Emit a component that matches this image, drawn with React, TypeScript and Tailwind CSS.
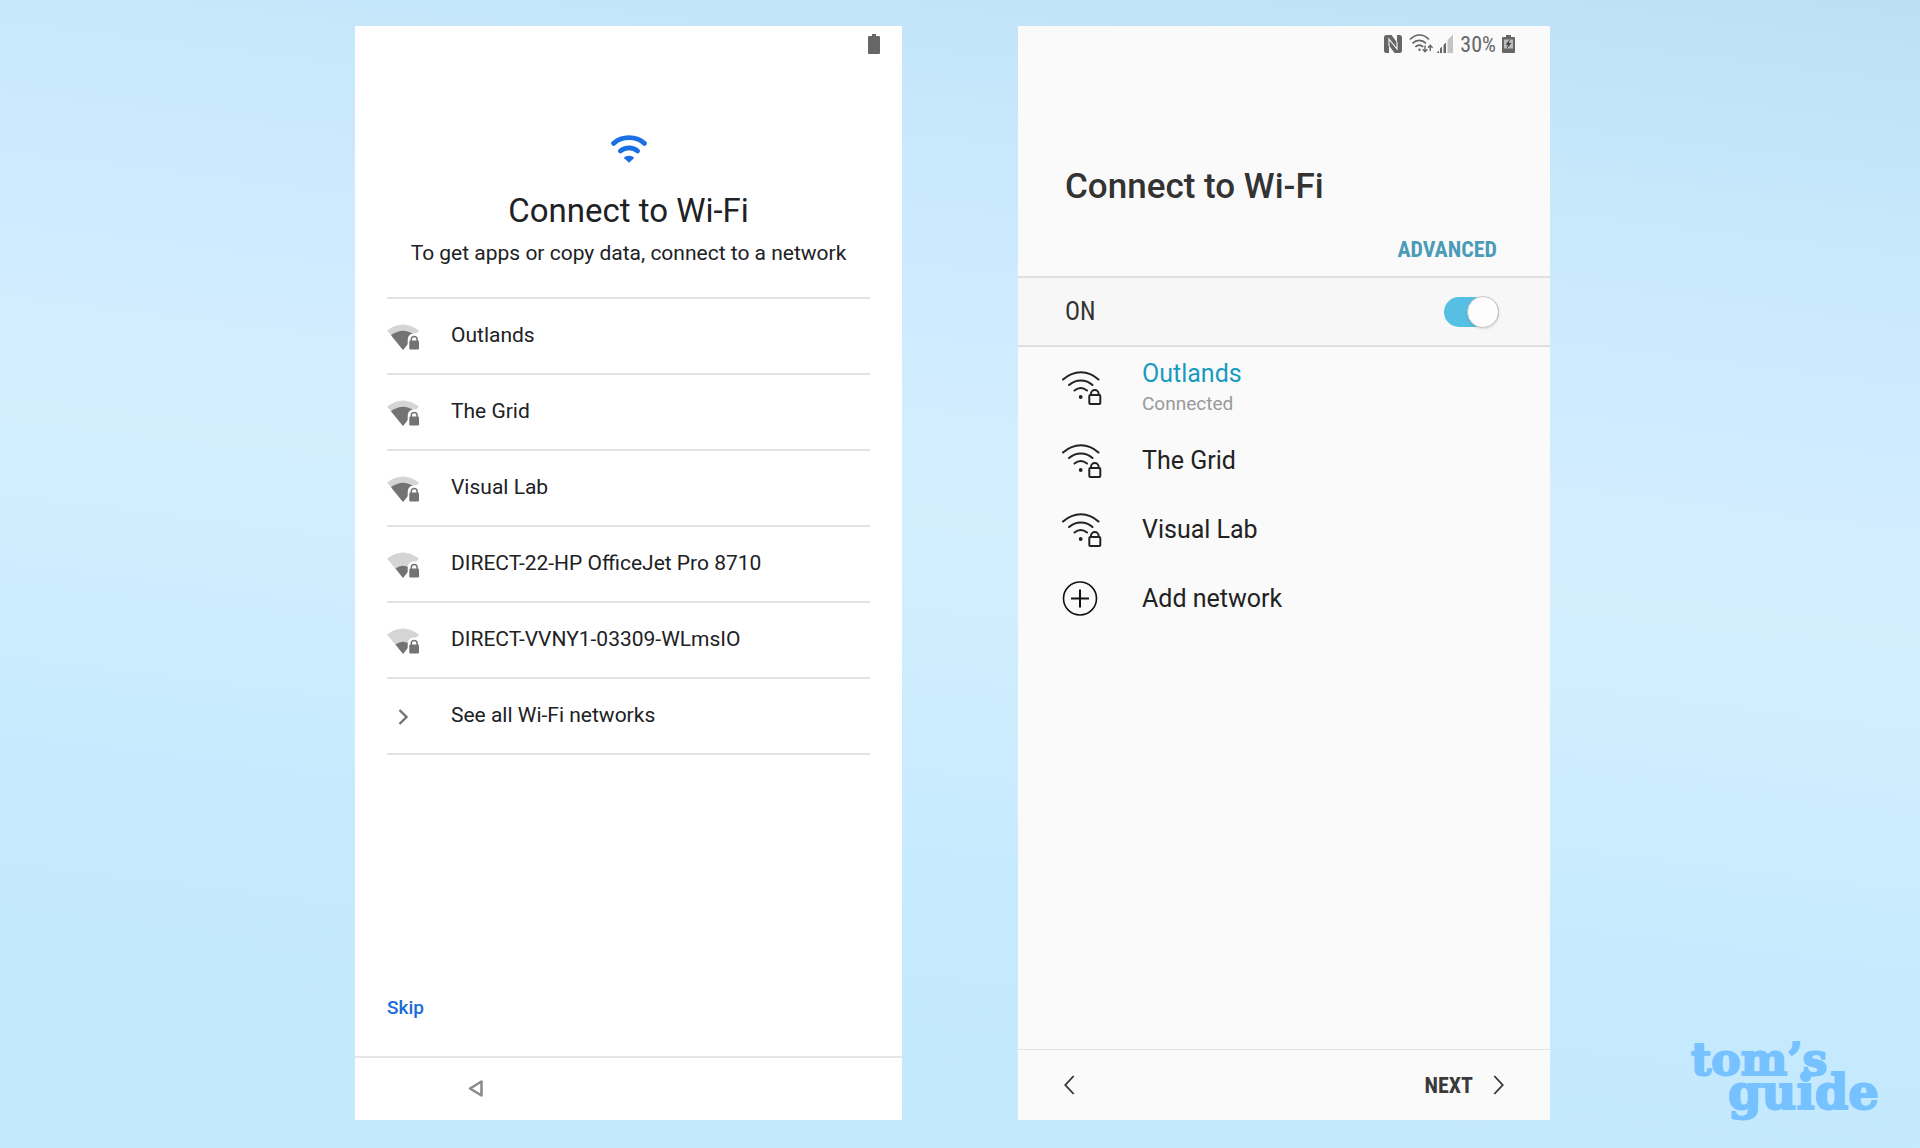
import { ReactNode, useState } from "react";

interface Network {
  name: string;
  strong: boolean;
}

const pixelNetworks: Network[] = [
  { name: "Outlands", strong: true },
  { name: "The Grid", strong: true },
  { name: "Visual Lab", strong: true },
  { name: "DIRECT-22-HP OfficeJet Pro 8710", strong: false },
  { name: "DIRECT-VVNY1-03309-WLmsIO", strong: false },
];

/* ── ICONS ── */

function BatteryIcon() {
  return (
    <svg width="12" height="20" viewBox="0 0 12 20" fill="#666" aria-hidden="true">
      <path d="M4 0h4v2h2.7c.7 0 1.3.6 1.3 1.3V18.7c0 .7-.6 1.3-1.3 1.3H1.3C.6 20 0 19.4 0 18.7V3.3C0 2.6.6 2 1.3 2H4z" />
    </svg>
  );
}

function BlueWifiIcon() {
  return (
    <svg width="36" height="28" viewBox="0 0 36 28" fill="none" stroke="#1a6fe3" strokeWidth="4.8" strokeLinecap="round" aria-hidden="true">
      <path d="M2.6 8.4C11 .8 25 .8 33.4 8.4" />
      <path d="M9.4 16C14.2 11.8 21.8 11.8 26.6 16" />
      <path d="M18 27.8l-4.6-4.2q-.8-1.2.6-1.9 4-1.7 8 0 1.4.7.6 1.9z" fill="#1a6fe3" stroke="none" />
    </svg>
  );
}

function SignalIcon({ strong }: { strong: boolean }) {
  return (
    <svg width="33" height="26" viewBox="0 0 33 26" aria-hidden="true">
      <path d="M0 6.5Q16-5.5 32 6.5L16 26z" fill="#d5d5d5" />
      {strong ? (
        <path d="M4 11.3Q16 2 28 11.3L16 26z" fill="#737373" />
      ) : (
        <path d="M8.5 16.5Q16 11 23.5 16.5L16 26z" fill="#737373" />
      )}
      <path d="M20.7 26V16.5C20.7 12 23 9.5 27 9.5H33V26z" fill="#fff" />
      <rect x="22.3" y="16.5" width="9.7" height="9" rx="1.2" fill="#737373" />
      <path d="M24.3 17.5V15.5a2.9 2.9 0 0 1 5.8 0V17.5" fill="none" stroke="#737373" strokeWidth="1.5" />
    </svg>
  );
}

function OutlineWifiIcon() {
  return (
    <svg width="40" height="34" viewBox="0 0 40 34" fill="none" stroke="#222" strokeWidth="2" strokeLinecap="round" aria-hidden="true">
      <path d="M1 8.5C12-1.2 26-1.2 36.5 8.5" />
      <path d="M7 14C14 8 24 8 30.5 14" />
      <path d="M12.5 19.5C16.5 16.2 21 16.2 25 19.5" />
      <circle cx="18.7" cy="26" r="1.9" fill="#222" stroke="none" />
      <rect x="27.3" y="24" width="11" height="9" rx="1" />
      <path d="M29 24v-1.2a3.8 3.8 0 0 1 7.6 0V24" />
    </svg>
  );
}

function AddIcon() {
  return (
    <svg width="36" height="36" viewBox="0 0 36 36" fill="none" stroke="#111" aria-hidden="true">
      <circle cx="18" cy="17.5" r="16.5" strokeWidth="1.6" />
      <path d="M18 8.5v18M9 17.5h18" strokeWidth="2" />
    </svg>
  );
}

function ChevronIcon({ back = false }: { back?: boolean }) {
  return (
    <svg width="11" height="20" viewBox="0 0 11 20" fill="none" stroke="#333" strokeWidth="1.8" aria-hidden="true">
      <path d={back ? "M9.7 1 1.3 10l8.4 9" : "M1.3 1l8.4 9-8.4 9"} />
    </svg>
  );
}

function StatusIcons() {
  return (
    <svg width="70" height="20" viewBox="0 0 70 20" fill="none" stroke="#666" aria-hidden="true">
      {/* nfc */}
      <path d="M2.5 1H7.5L13 8.5V1H15.5Q18 1 18 3.5V16.5Q18 19 15.5 19H10.5L5 11.5V19H2.5Q0 19 0 16.5V3.5Q0 1 2.5 1z" fill="#666" stroke="none" />
      <path d="M5 12V5l8 10V8" stroke="#fafafa" strokeWidth="1.1" />
      {/* wifi */}
      <path d="M26 5.5C31.5-.5 39.5-.5 45 5.5M28.5 9.3c4-4 9.5-4 13.5 0M31.3 12.8c2.5-2.2 5.5-2.2 8 0" strokeWidth="1.7" />
      <circle cx="35.5" cy="15.8" r="1.2" fill="#666" stroke="none" />
      <path d="M41 11.5v6M38.7 15.2l2.3 2.6 2.3-2.6M46.3 17v-5M44 13.8l2.3-2.6 2.3 2.6" strokeWidth="1.4" />
      {/* cell signal */}
      <path d="M63.5 19V6L69 .5V19z" fill="#c4c4c4" stroke="none" />
      <path d="M52.5 19l2.5-2.5V19zM56 19v-4.5l2-2V19zM59.5 19v-8l2.5-2.5V19z" fill="#666" stroke="none" />
    </svg>
  );
}

function ChargingIcon() {
  return (
    <svg width="13" height="18" viewBox="0 0 13 18" fill="#666" aria-hidden="true">
      <path d="M4 0h5v2h3q1 0 1 1v14q0 1-1 1H1q-1 0-1-1V3q0-1 1-1h3z" />
      <path d="M2 4.5h9v9H2z" fill="#bbb" />
      <path d="M8 4 3.5 9.7h2.3L4.5 14l5-6H7z" fill="#444" />
    </svg>
  );
}

function TomsGuideLogo() {
  return (
    <svg
      width="196"
      height="92"
      viewBox="0 0 196 92"
      className="font-[DejaVu_Serif,serif] font-bold"
      fill="#76c1ff"
      stroke="#76c1ff"
      strokeWidth="2"
      strokeLinejoin="round"
      role="img"
      aria-label="tom’s guide"
    >
      <text x="3" y="43" fontSize="44">tom’s</text>
      <text x="40" y="77" fontSize="48">guide</text>
    </svg>
  );
}

/* ── LEFT PHONE ── */

function PixelRow({ icon, label }: { icon: ReactNode; label: string }) {
  return (
    <li className="border-b-2 border-[#e2e2e2]">
      <button type="button" className="flex h-[74px] w-full items-center text-left">
        <span className="flex w-16 pt-0.5">{icon}</span>
        <span>{label}</span>
      </button>
    </li>
  );
}

function PixelPhone() {
  return (
    <section className="flex min-w-0 flex-[547] flex-col bg-white font-[Roboto,sans-serif] text-[#202124]">
      <div className="flex h-10 justify-end pt-2 pr-[22px]">
        <BatteryIcon />
      </div>

      <header className="flex flex-col items-center pt-[69px]">
        <BlueWifiIcon />
        <h1 className="mt-6 text-[33px] leading-12">Connect to Wi-Fi</h1>
        <p className="mt-0.5 text-[21px] leading-8">To get apps or copy data, connect to a network</p>
      </header>

      <ul className="mx-8 mt-7 border-t-2 border-[#e2e2e2] text-[21px]">
        {pixelNetworks.map((n) => (
          <PixelRow key={n.name} icon={<SignalIcon strong={n.strong} />} label={n.name} />
        ))}
        <PixelRow
          label="See all Wi-Fi networks"
          icon={
            <svg width="33" height="16" viewBox="0 0 33 16" fill="none" stroke="#737373" strokeWidth="2.4" aria-hidden="true">
              <path d="M12.5 1l7 7-7 7" />
            </svg>
          }
        />
      </ul>

      <button
        type="button"
        className="mt-auto mb-8 ml-8 self-start text-[19px] leading-8 font-medium text-[#1a6bd8]"
      >
        Skip
      </button>

      <nav className="flex h-16 items-center border-t-2 border-[#e6e6e6]">
        <button type="button" aria-label="Back" className="ml-[113px]">
          <svg width="16" height="18" viewBox="0 0 16 18" fill="none" stroke="#8c8c8c" strokeWidth="2.6" strokeLinejoin="round" aria-hidden="true">
            <path d="M13.5 1.5v14L2 8.5z" />
          </svg>
        </button>
      </nav>
    </section>
  );
}

/* ── RIGHT PHONE ── */

function GalaxyRow({ icon, label }: { icon: ReactNode; label: string }) {
  return (
    <li>
      <button type="button" className="flex h-[69px] w-full items-center text-left">
        <span className="flex w-20">{icon}</span>
        <span>{label}</span>
      </button>
    </li>
  );
}

function GalaxyPhone() {
  const [wifiOn, setWifiOn] = useState(true);

  return (
    <section className="flex min-w-0 flex-[532] flex-col bg-[#fafafa] font-[Roboto,sans-serif] text-[#222]">
      <div className="flex h-9 items-center justify-end pr-[35px] text-[22px] text-[#666]">
        <StatusIcons />
        <span className="mx-1.5 font-[Roboto_Condensed,Roboto,sans-serif]">30%</span>
        <ChargingIcon />
      </div>

      <header className="flex flex-col pt-[101px] pr-[53px] pl-[47px]">
        <h1 className="text-[35px] leading-12 font-medium text-[#333]">Connect to Wi-Fi</h1>
        <button
          type="button"
          className="mt-[23px] self-end font-[Roboto_Condensed,Roboto,sans-serif] text-[22px] leading-8 font-bold text-[#4a9ab8]"
        >
          ADVANCED
        </button>
      </header>

      <label className="mt-2.5 flex h-[71px] items-center justify-between border-y-2 border-[#e0e0e0] bg-[#f7f7f7] pr-[51px] pl-[47px] font-[Roboto_Condensed,Roboto,sans-serif] text-[25px] text-[#333]">
        <span>{wifiOn ? "ON" : "OFF"}</span>
        <span className="relative flex h-8 w-[55px] items-center">
          <input
            type="checkbox"
            role="switch"
            checked={wifiOn}
            onChange={(e) => setWifiOn(e.target.checked)}
            className="peer h-[30px] w-full appearance-none rounded-full bg-[#bbb] checked:bg-[#56c0e4]"
          />
          <span className="pointer-events-none absolute left-0 size-8 rounded-full border border-[#c8c8c8] bg-[#fdfdfd] shadow-sm peer-checked:right-0 peer-checked:left-auto" />
        </span>
      </label>

      <ul className="pt-0.5 pl-11 text-[25px]">
        <li>
          <button type="button" className="flex h-[77px] w-full items-center text-left">
            <span className="flex w-20">
              <OutlineWifiIcon />
            </span>
            <span className="flex flex-col">
              <span className="leading-8 text-[#1a9bbd]">Outlands</span>
              <span className="text-[19px] leading-7 text-[#999]">Connected</span>
            </span>
          </button>
        </li>
        <GalaxyRow icon={<OutlineWifiIcon />} label="The Grid" />
        <GalaxyRow icon={<OutlineWifiIcon />} label="Visual Lab" />
        <GalaxyRow icon={<AddIcon />} label="Add network" />
      </ul>

      <nav className="mt-auto flex h-[71px] items-center justify-between border-t border-[#e4e4e4] px-[46px]">
        <button type="button" aria-label="Back">
          <ChevronIcon back />
        </button>
        <button
          type="button"
          className="flex items-center gap-5 font-[Roboto_Condensed,Roboto,sans-serif] text-[22px] font-bold text-[#3a3a3a]"
        >
          NEXT
          <ChevronIcon />
        </button>
      </nav>
    </section>
  );
}

export default function App() {
  return (
    <main className="relative flex min-h-screen gap-[116px] bg-[linear-gradient(187deg,#bbe0f6,#c7e8fb_17%,#cfebff_32%,#d3effe_46%,#c5eafe_75%,#c3e9fe)] pt-[26px] pr-[370px] pb-7 pl-[355px]">
      <PixelPhone />
      <GalaxyPhone />
      <div className="absolute right-9 bottom-6">
        <TomsGuideLogo />
      </div>
    </main>
  );
}
